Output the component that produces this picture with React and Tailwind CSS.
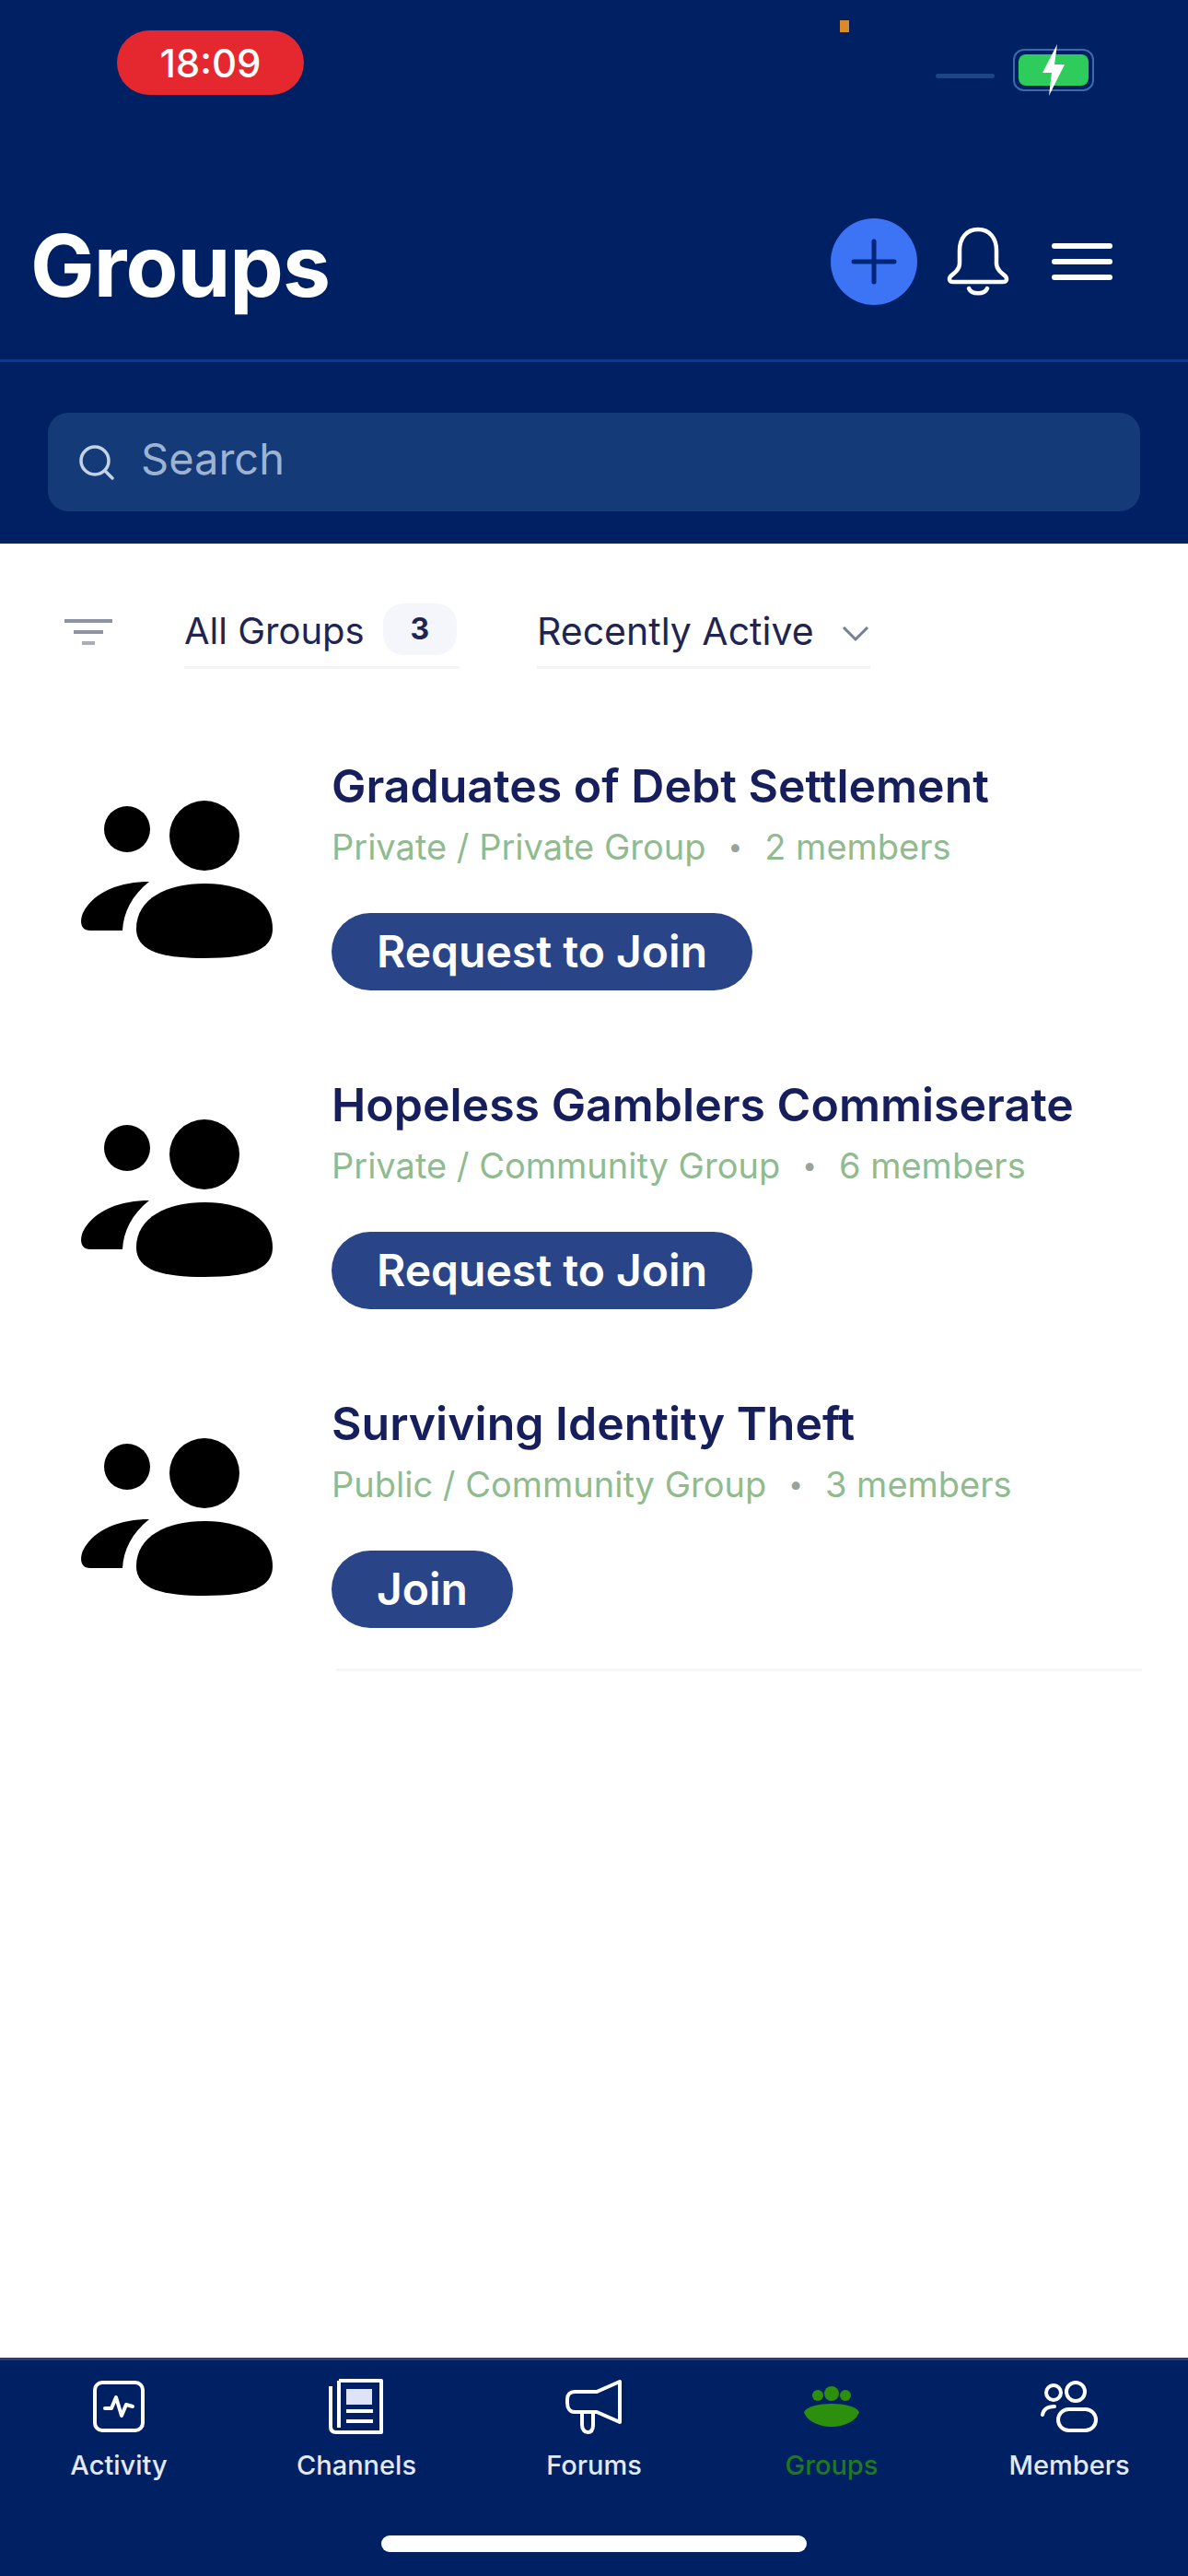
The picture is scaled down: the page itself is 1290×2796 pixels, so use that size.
import React from 'react';

const groups = [
  { name: 'Graduates of Debt Settlement', kind: 'Private / Private Group', members: '2 members', action: 'Request to Join' },
  { name: 'Hopeless Gamblers Commiserate', kind: 'Private / Community Group', members: '6 members', action: 'Request to Join' },
  { name: 'Surviving Identity Theft', kind: 'Public / Community Group', members: '3 members', action: 'Join' },
];

function GroupIcon() {
  return (
    <svg width="212" height="172" viewBox="0 0 212 172" fill="#000" className="shrink-0">
      <circle cx="51" cy="31" r="25" />
      <circle cx="135" cy="38" r="38" />
      <path d="M75 88C45 88 15 98 3 122C-1 132 1 141 11 141H46C47 122 56 103 75 88Z" />
      <path d="M135 90C175 90 209 106 209 139C209 164 180 171 135 171C90 171 61 164 61 139C61 106 95 90 135 90Z" />
    </svg>
  );
}

function GroupRow({ group }) {
  return (
    <div className="flex h-[346px] pl-[87px]">
      <div className="w-[273px] pt-[46px]">
        <GroupIcon />
      </div>
      <div className="flex flex-col items-start">
        <div className="text-[50px] leading-[60px] font-semibold text-[#161f5c] whitespace-nowrap">{group.name}</div>
        <div className="mt-[10px] flex items-center text-[38px] leading-[52px] text-[#8fbb8f] whitespace-nowrap">
          <span>{group.kind}</span>
          <span className="mx-[24px] text-[#9aa39a] text-[28px]">•</span>
          <span>{group.members}</span>
        </div>
        <button className="mt-[46px] h-[84px] px-[49px] rounded-full bg-[#2a4488] text-white text-[48px] font-semibold whitespace-nowrap">
          {group.action}
        </button>
      </div>
    </div>
  );
}

function ActivityIcon() {
  return (
    <svg width="56" height="56" viewBox="0 0 56 56" fill="none" stroke="#fff" strokeWidth="4" strokeLinejoin="round" strokeLinecap="round">
      <rect x="2" y="2" width="52" height="52" rx="8" />
      <path d="M13 30L20 30L25 18L31 38L36 26L43 28" />
    </svg>
  );
}

function ChannelsIcon() {
  return (
    <svg width="60" height="62" viewBox="0 0 60 62" fill="none" stroke="#fff" strokeWidth="4" strokeLinejoin="round">
      <path d="M11 3H57V59H8C4 59 2 57 2 53V9" />
      <path d="M11 3V54" />
      <rect x="19" y="12" width="28" height="17" fill="#dfe3f7" stroke="none" />
      <path d="M19 36H48M19 47H48" />
    </svg>
  );
}

function ForumsIcon() {
  return (
    <svg width="62" height="60" viewBox="0 0 62 60" fill="none" stroke="#fff" strokeWidth="4" strokeLinejoin="round" strokeLinecap="round">
      <path d="M59 3V47L34 36H10C5 36 2 32 2 26V22C2 17 5 14 10 14H34Z" />
      <path d="M18 36V50C18 55 21 58 24 58C28 58 30 55 30 50V36" />
    </svg>
  );
}

function GroupsNavIcon() {
  return (
    <svg width="62" height="44" viewBox="0 0 62 44" fill="#2c8f0e">
      <circle cx="16" cy="10" r="6" />
      <circle cx="31" cy="8" r="8" />
      <circle cx="46" cy="10" r="6" />
      <path d="M31 19C44 19 58 22 61 28C58 38 44 44 31 44C18 44 4 38 1 28C4 22 18 19 31 19Z" />
    </svg>
  );
}

function MembersIcon() {
  return (
    <svg width="62" height="56" viewBox="0 0 62 56" fill="none" stroke="#fff" strokeWidth="4" strokeLinecap="round">
      <circle cx="14" cy="13" r="8" />
      <circle cx="38" cy="12" r="10" />
      <path d="M2 37C3 31 8 28 15 28" />
      <rect x="19" y="31" width="41" height="23" rx="11.5" />
    </svg>
  );
}

const navItems = [
  { label: 'Activity', icon: <ActivityIcon /> },
  { label: 'Channels', icon: <ChannelsIcon /> },
  { label: 'Forums', icon: <ForumsIcon /> },
  { label: 'Groups', icon: <GroupsNavIcon />, active: true },
  { label: 'Members', icon: <MembersIcon /> },
];

export default function App() {
  return (
    <div className="relative flex flex-col w-[1290px] h-[2796px] bg-white overflow-hidden font-['Inter',sans-serif]">
      {/* orange privacy dot */}
      <div className="absolute left-[912px] top-[22px] w-[10px] h-[13px] bg-[#d98a2b]" />

      {/* Header */}
      <header className="h-[590px] shrink-0 flex flex-col bg-[#002064]">
        <div className="h-[235px] flex items-start justify-between pl-[127px] pr-[102px] pt-[33px]">
          <div className="w-[203px] h-[70px] rounded-full bg-[#e5282f] flex items-center justify-center text-white text-[42px] font-medium">
            18:09
          </div>
          <div className="flex items-center gap-[20px] pt-[20px]">
            <div className="w-[64px] h-[5px] mt-[12px] bg-[#1d4585] rounded-full" />
            <div className="relative w-[88px] h-[46px] rounded-[12px] border-2 border-[#3f6aa8] p-[4px]">
              <div className="w-full h-full rounded-[8px] bg-[#2ecc5b]" />
              <svg width="30" height="56" viewBox="0 0 30 56" fill="#fff" className="absolute left-[27px] top-[-7px]">
                <path d="M19 0L3 31H13L10 56L27 22H16Z" />
              </svg>
            </div>
          </div>
        </div>

        <div className="h-[155px] flex items-start justify-between pl-[33px] pr-[82px]">
          <h1 className="text-[93px] leading-[106px] font-bold text-white tracking-[-1px]">Groups</h1>
          <div className="flex items-center gap-[32px] mt-[2px]">
            <div className="w-[94px] h-[94px] rounded-full bg-[#3d73f5] flex items-center justify-center">
              <svg width="50" height="50" viewBox="0 0 50 50" stroke="#00267a" strokeWidth="5" strokeLinecap="round">
                <path d="M25 3V47M3 25H47" />
              </svg>
            </div>
            <svg width="68" height="76" viewBox="0 0 68 76" fill="none" stroke="#fff" strokeWidth="4.5" strokeLinejoin="round" strokeLinecap="round">
              <path d="M34 3C21 3 14 13 14 26V40C14 46 9 50 4 54C2 57 3 60 7 60H61C65 60 66 57 64 54C59 50 54 46 54 40V26C54 13 47 3 34 3Z" />
              <path d="M24 67C27 74 41 74 44 67" />
            </svg>
            <div className="flex flex-col gap-[11px] ml-[14px]">
              <div className="w-[66px] h-[6px] bg-white rounded-full" />
              <div className="w-[66px] h-[6px] bg-white rounded-full" />
              <div className="w-[66px] h-[6px] bg-white rounded-full" />
            </div>
          </div>
        </div>

        <div className="h-[3px] bg-[#0c3a88]" />

        <div className="px-[52px] pt-[55px]">
          <div className="h-[107px] rounded-[22px] bg-[#143a78] flex items-center pl-[32px] gap-[27px]">
            <svg width="42" height="42" viewBox="0 0 42 42" fill="none" stroke="#c4d2e6" strokeWidth="3.5" strokeLinecap="round">
              <circle cx="19" cy="19" r="15" />
              <path d="M30 30L38 38" />
            </svg>
            <span className="text-[47px] -mt-[6px] text-[#9db3d2]">Search</span>
          </div>
        </div>
      </header>

      {/* Body */}
      <main className="flex-1 flex flex-col">
        <div className="h-[139px] pt-[64px] flex items-start pl-[70px]">
          <div className="w-[130px] flex flex-col items-start gap-[8px] pt-[18px]">
            <div className="w-[52px] h-[4px] bg-[#8d93a5]" />
            <div className="w-[32px] h-[4px] ml-[10px] bg-[#8d93a5]" />
            <div className="w-[14px] h-[4px] ml-[19px] bg-[#a9aebb]" />
          </div>
          <div className="w-[299px] h-[72px] border-b-[3px] border-[#f3f4f6] flex items-start pt-[5px]">
            <span className="text-[40px] leading-[52px] text-[#1f2550] whitespace-nowrap">All Groups</span>
            <span className="ml-[20px] -mt-[4px] w-[80px] h-[56px] rounded-[22px] bg-[#f4f6fc] flex items-center justify-center text-[32px] font-bold text-[#1f2550]">3</span>
          </div>
          <div className="ml-[84px] w-[362px] h-[72px] border-b-[3px] border-[#f3f4f6] flex items-start pt-[5px]">
            <span className="text-[41px] leading-[52px] text-[#1f2550] whitespace-nowrap">Recently Active</span>
            <svg width="30" height="18" viewBox="0 0 30 18" fill="none" stroke="#777d96" strokeWidth="3" className="ml-[30px] mt-[20px]">
              <path d="M2 2L15 15L28 2" />
            </svg>
          </div>
        </div>

        <div className="pt-[94px]">
          {groups.map((g) => (
            <GroupRow key={g.name} group={g} />
          ))}
          <div className="-mt-[50px] ml-[365px] mr-[50px] h-[3px] bg-[#f5f6f8]" />
        </div>
      </main>

      {/* Bottom nav */}
      <nav className="h-[237px] shrink-0 bg-[#002064] border-t-[3px] border-[#2c3a78] flex flex-col">
        <div className="grid grid-cols-5 pt-[19px]">
          {navItems.map((item) => (
            <div key={item.label} className="flex flex-col items-center">
              <div className="h-[62px] flex items-center justify-center">{item.icon}</div>
              <span className={`mt-[15px] text-[29px] leading-[36px] font-medium ${item.active ? 'text-[#1f7a1f]' : 'text-[#e3e8f5]'}`}>
                {item.label}
              </span>
            </div>
          ))}
        </div>
        <div className="mt-auto mb-[26px] mx-auto w-[462px] h-[18px] rounded-full bg-white" />
      </nav>
    </div>
  );
}
